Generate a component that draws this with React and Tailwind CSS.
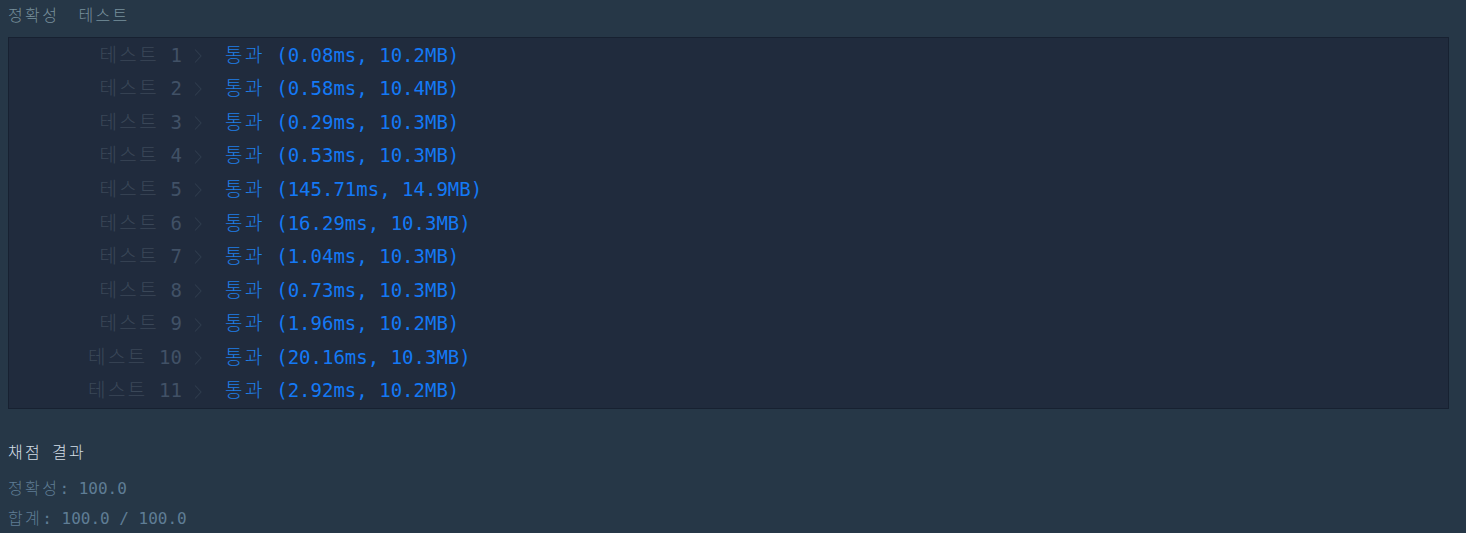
import React from "react";

const results = [
  { n: 1, time: "0.08ms", mem: "10.2MB" },
  { n: 2, time: "0.58ms", mem: "10.4MB" },
  { n: 3, time: "0.29ms", mem: "10.3MB" },
  { n: 4, time: "0.53ms", mem: "10.3MB" },
  { n: 5, time: "145.71ms", mem: "14.9MB" },
  { n: 6, time: "16.29ms", mem: "10.3MB" },
  { n: 7, time: "1.04ms", mem: "10.3MB" },
  { n: 8, time: "0.73ms", mem: "10.3MB" },
  { n: 9, time: "1.96ms", mem: "10.2MB" },
  { n: 10, time: "20.16ms", mem: "10.3MB" },
  { n: 11, time: "2.92ms", mem: "10.2MB" },
];

const mono = "font-['DejaVu_Sans_Mono','Noto_Sans_CJK_KR',monospace]";

// hangul in the reference font runs a bit wider than Noto's
const Ko = ({ children, className = "" }) => (
  <span className={`tracking-[2.4px] font-light ${className}`}>{children}</span>
);

const Chevron = () => (
  <svg width="10" height="16" viewBox="0 0 10 16" className="shrink-0 mt-[2px]">
    <path d="M2 1.5 L8 8 L2 14.5" fill="none" stroke="#2f3c4d" strokeWidth="1.1" />
  </svg>
);

const App = () => {
  return (
    <div className={`w-[1466px] h-[533px] bg-[#263747] ${mono} overflow-hidden`}>
      <div className="flex gap-[19px] pl-2 h-[37px] pt-[4px] text-[16px] leading-[24px] text-[#78909c]">
        <Ko>정확성</Ko>
        <Ko>테스트</Ko>
      </div>
      <div className="ml-2 mr-[17px] bg-[#202b3d] border border-[#172131] text-[19px]">
        {results.map((r) => (
          <div key={r.n} className="flex items-center h-[33.6px]">
            <span className="w-[173px] text-right whitespace-pre text-[#415166]">
              <Ko className="text-[#3a4758]">테스트</Ko> {r.n}
            </span>
            <span className="ml-[11px] flex items-center">
              <Chevron />
            </span>
            <span className="ml-[22px] whitespace-pre text-[#1479f5]">
              <Ko className="text-[#1f7fe8]">통과</Ko> ({r.time}, {r.mem})
            </span>
          </div>
        ))}
      </div>
      <div className="pl-2 pt-[32px] text-[16px]">
        <div className="leading-[24px] text-[#d2dde6]">
          <Ko>채점</Ko> <Ko>결과</Ko>
        </div>
        <div className="mt-[12px] leading-[24px] text-[#5f7d95] whitespace-pre">
          <Ko>정확성</Ko>: 100.0
        </div>
        <div className="mt-[6px] leading-[24px] text-[#5f7d95] whitespace-pre">
          <Ko>합계</Ko>: 100.0 / 100.0
        </div>
      </div>
    </div>
  );
};

export default App;
